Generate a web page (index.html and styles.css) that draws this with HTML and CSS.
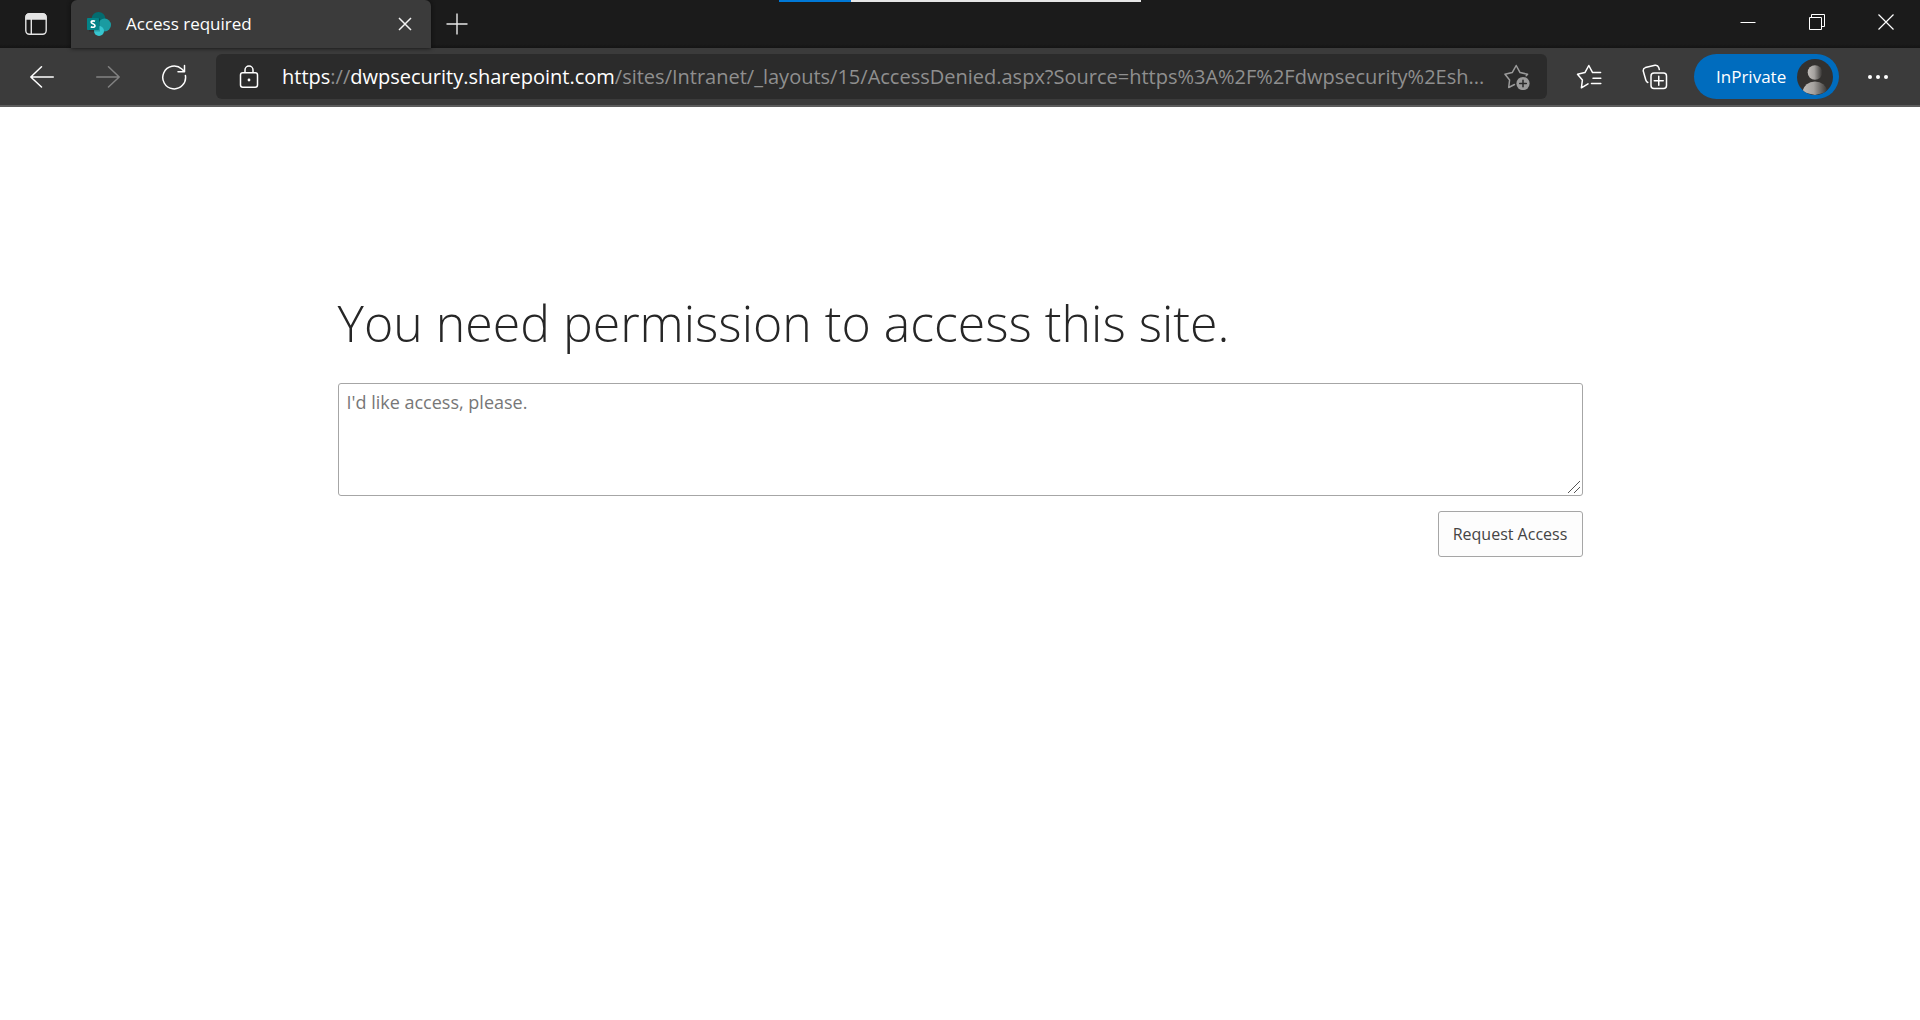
FILE: index.html
```html
<!DOCTYPE html>
<html lang="en">
<head>
<meta charset="utf-8">
<title>Access required</title>
<link rel="stylesheet" href="styles.css">
</head>
<body>
<header class="browser">
  <div class="progress"><span class="progress-done"></span></div>
  <div class="tab-strip">
    <button class="tab-menu" aria-label="Tab actions">
      <svg width="22" height="22" viewBox="0 0 22 22" fill="none" stroke="#e4e4e4" stroke-width="1.4"><rect x=".8" y=".8" width="20.4" height="20.4" rx="3.6"/><path d="M1 4.5Q1 1 4.500 1h13Q21 1 21 4.500V6H1z" fill="#e4e4e4"/><path d="M6.300 6v15"/></svg>
    </button>
    <div class="tab">
      <svg class="favicon" width="24" height="24" viewBox="0 0 24 24"><circle cx="11.500" cy="7" r="7" fill="#036c70"/><circle cx="17.600" cy="13" r="6.400" fill="#1a9ba1"/><circle cx="12" cy="19" r="5" fill="#37c6d0"/><rect x="2" y="6.500" width="11" height="13" fill="#000" opacity=".2"/><rect y="6" width="12" height="12" rx=".8" fill="#038387"/><path d="M8 9.300Q7.200 8.900 6.100 8.900C4.800 8.900 4.200 9.500 4.200 10.200C4.200 12 8 11.500 8 13.700C8 15 6.600 15.400 5.600 15.300Q4.600 15.200 3.800 14.800" fill="none" stroke="#fff" stroke-width="1.600"/></svg>
      <span class="tab-title">Access required</span>
      <button class="tab-close" aria-label="Close tab"><svg width="14" height="14" viewBox="0 0 14 14" stroke="#f2f2f2" stroke-width="1.500"><path d="M1 1l12 12M13 1L1 13"/></svg></button>
    </div>
    <button class="tab-new" aria-label="New tab"><svg width="22" height="22" viewBox="0 0 22 22" stroke="#e8e8e8" stroke-width="1.400"><path d="M11 .5v21M.5 11h21"/></svg></button>
    <div class="window-buttons">
      <button aria-label="Minimize"><svg width="16" height="16" viewBox="0 0 16 16" stroke="#fff"><path d="M.5 8.500h15"/></svg></button>
      <button aria-label="Restore"><svg width="16" height="16" viewBox="0 0 16 16" stroke="#fff" fill="none"><path d="M.5 3.500h12v12H.5zM2.500 3V.5h13v12H13"/></svg></button>
      <button aria-label="Close"><svg width="16" height="16" viewBox="0 0 16 16" stroke="#fff" stroke-width="1.200"><path d="M.5.5l15 15M15.500.5l-15 15"/></svg></button>
    </div>
  </div>
  <nav class="toolbar">
    <div class="group">
      <button aria-label="Back"><svg width="24" height="24" viewBox="0 0 24 24" fill="none" stroke="#fff" stroke-width="1.500" stroke-linecap="round" stroke-linejoin="round"><path d="M23.300 12H.8M11.500 1.800L.8 12l10.700 10"/></svg></button>
      <button aria-label="Forward" disabled><svg width="24" height="24" viewBox="0 0 24 24" fill="none" stroke="#828282" stroke-width="1.500" stroke-linecap="round" stroke-linejoin="round"><path d="M.7 12h22.500M12.500 1.800L23.200 12l-10.700 10"/></svg></button>
      <button aria-label="Refresh"><svg width="26" height="26" viewBox="0 0 26 26" fill="none" stroke="#fff" stroke-width="1.500" stroke-linecap="round" stroke-linejoin="round"><path d="M24.400 11.500A11.400 11.400 0 1 1 20.800 5l2.700 2.800M23.500 1.500v6.300h-6.500"/></svg></button>
    </div>
    <div class="address">
      <button class="lock" aria-label="Site information"><svg width="20" height="24" viewBox="0 0 20 24" fill="none" stroke="#fff" stroke-width="1.500"><rect x="1.500" y="7.800" width="17" height="14.500" rx="2.200"/><path d="M6 7.500V5a4 4 0 0 1 8 0v2.500"/><circle cx="10" cy="15" r="1.400" fill="#fff" stroke="none"/></svg></button>
      <div class="url" role="textbox" contenteditable="true" spellcheck="false" aria-label="Address"><span class="strong">https</span>://<span class="strong">dwpsecurity.sharepoint.com</span>/sites/Intranet/_layouts/15/AccessDenied.aspx?Source=https%3A%2F%2Fdwpsecurity%2Esh...</div>
      <button class="add-favorite" aria-label="Add to favorites"><svg width="26" height="26" viewBox="0 0 26 26" fill="none" stroke="#9b9b9b" stroke-width="1.500" stroke-linejoin="round" stroke-linecap="round"><path d="M10.500 20.500l-5.800 3 .9-7.500L1 10.200l7.200-1.600L12.200 1.500l3.900 7.100 7.500 1.600-1.400 1.500"/><circle cx="19" cy="19.500" r="6.600" fill="#9b9b9b" stroke="none"/><path d="M19 16.200v6.600M15.700 19.500h6.600" stroke="#2b2b2b"/></svg></button>
    </div>
    <div class="group">
      <button aria-label="Favorites"><svg width="26" height="26" viewBox="0 0 26 26" fill="none" stroke="#fff" stroke-width="1.500" stroke-linejoin="round" stroke-linecap="round"><path d="M12 19.800l-6.600 4 1-7.800L1.500 10.200l7.400-1.600L12.800 1.500l3.800 7.100h8M17 14.300h7.800M15.500 19.500h9.300"/></svg></button>
      <button aria-label="Collections"><svg width="26" height="26" viewBox="0 0 26 26" fill="none" stroke="#fff" stroke-width="1.500" stroke-linejoin="round" stroke-linecap="round"><rect x="9" y="9" width="15.500" height="15.500" rx="3"/><path d="M16.750 12.200v9M12.250 16.700h9M5.800 18.500Q4.300 17.800 3.800 16L1.300 7.300Q.8 4.500 3.400 3.600L13 1.200Q15.800.8 16.700 3.400L17.300 5.500"/></svg></button>
    </div>
    <button class="profile">InPrivate
      <svg width="36" height="36" viewBox="0 0 36 36"><defs><linearGradient id="shade"><stop offset="0" stop-color="#c0bcb8"/><stop offset=".45" stop-color="#a5a29f"/><stop offset="1" stop-color="#33312f"/></linearGradient><clipPath id="disc"><circle cx="18" cy="18" r="18"/></clipPath></defs><g clip-path="url(#disc)"><path d="M0 0h36v36H0z" fill="#33312f"/><circle cx="18" cy="13.500" r="7.300" fill="url(#shade)"/><path d="M5 33Q8 22.500 18 22.500T31 33L18 36z" fill="url(#shade)"/></g></svg>
    </button>
    <button aria-label="Settings and more"><svg width="22" height="6" viewBox="0 0 22 6" fill="#fff"><circle cx="3" cy="3" r="2"/><circle cx="11" cy="3" r="2"/><circle cx="19" cy="3" r="2"/></svg></button>
  </nav>
</header>
<main class="page">
  <h1>You need permission to access this site.</h1>
  <form class="request">
    <textarea aria-label="Message to the site owner" placeholder="I'd like access, please."></textarea>
    <button type="button">Request Access</button>
  </form>
</main>
</body>
</html>
```

FILE: styles.css
```css
* { box-sizing: border-box; }

body {
  margin: 0;
  background: #fff;
  font-family: "Segoe UI", "Open Sans", "Noto Sans", sans-serif;
}

button {
  display: flex;
  align-items: center;
  justify-content: center;
  margin: 0;
  padding: 0;
  border: 0;
  background: none;
  font-family: inherit;
}

svg { display: block; flex: none; }

.browser {
  position: relative;
  background: #3b3b3b;
  border-bottom: 2px solid #5c5c5c;
}

.progress {
  position: absolute;
  top: 0;
  left: 50%;
  width: 362px;
  height: 2px;
  transform: translateX(-50%);
  background: #e6e6e6;
}

.progress-done {
  display: block;
  width: 20%;
  height: 100%;
  background: #0078d7;
}

.tab-strip {
  display: flex;
  height: 48px;
  background: linear-gradient(#1b1b1b 44px, #141414);
}

.tab-menu { width: 71px; }

.tab {
  display: flex;
  align-items: center;
  width: 360px;
  padding: 0 16px;
  border-radius: 6px 6px 0 0;
  background: #3b3b3b;
  box-shadow: 0 0 4px #0d0d0d;
  color: #fff;
  font-size: 17px;
}

.tab-title { flex: 1; padding-left: 15px; line-height: 24px; }
.tab-close { width: 20px; height: 20px; }
.tab-new { width: 52px; }

.window-buttons { display: flex; margin-left: auto; padding-bottom: 5px; }
.window-buttons button { width: 69px; }

.toolbar {
  display: flex;
  align-items: center;
  gap: 15px;
  height: 57px;
  padding: 0 18px;
}

.toolbar button { height: 45px; min-width: 48px; }

.group { display: flex; gap: 18px; }

.address {
  display: flex;
  align-items: center;
  flex: 1;
  min-width: 0;
  height: 45px;
  margin: 0 3px;
  padding: 0 6px 0 9px;
  border-radius: 6px;
  background: #2b2b2b;
}

.url {
  flex: 1;
  min-width: 0;
  margin-left: 9px;
  overflow: hidden;
  color: #8f8f8f;
  font-size: 20px;
  line-height: 28px;
  text-overflow: ellipsis;
  white-space: nowrap;
}

.strong { color: #fff; }

.toolbar .profile {
  width: 145px;
  padding: 0 6px 0 22px;
  justify-content: space-between;
  border-radius: 23px;
  background: #006cbe;
  color: #fff;
  font-size: 17px;
}

.page {
  max-width: 1245px;
  margin: 0 auto;
  padding: 180px 0 24px;
}

h1 {
  margin: 0 0 24px;
  color: #262626;
  font-size: 50px;
  font-weight: 300;
  line-height: 72px;
}

.request {
  display: flex;
  flex-direction: column;
  align-items: flex-end;
  gap: 15px;
}

textarea {
  display: block;
  width: 100%;
  height: 113px;
  padding: 5px 8px;
  border: 1px solid #a6a6a6;
  border-radius: 3px;
  font-family: inherit;
  font-size: 18px;
  line-height: 26px;
  resize: both;
}

textarea::placeholder { color: #777; }

textarea::-webkit-resizer {
  background: url("data:image/svg+xml,%3Csvg xmlns='http://www.w3.org/2000/svg' viewBox='0 0 15 15'%3E%3Cpath d='M1 13L13 1M7 13l6-6' stroke='%23555'/%3E%3C/svg%3E") center / 15px 15px no-repeat;
}

.request button {
  width: 145px;
  height: 46px;
  border: 1px solid #a6a6a6;
  border-radius: 3px;
  background: #fdfdfd;
  color: #444;
  font-size: 16px;
}
```
